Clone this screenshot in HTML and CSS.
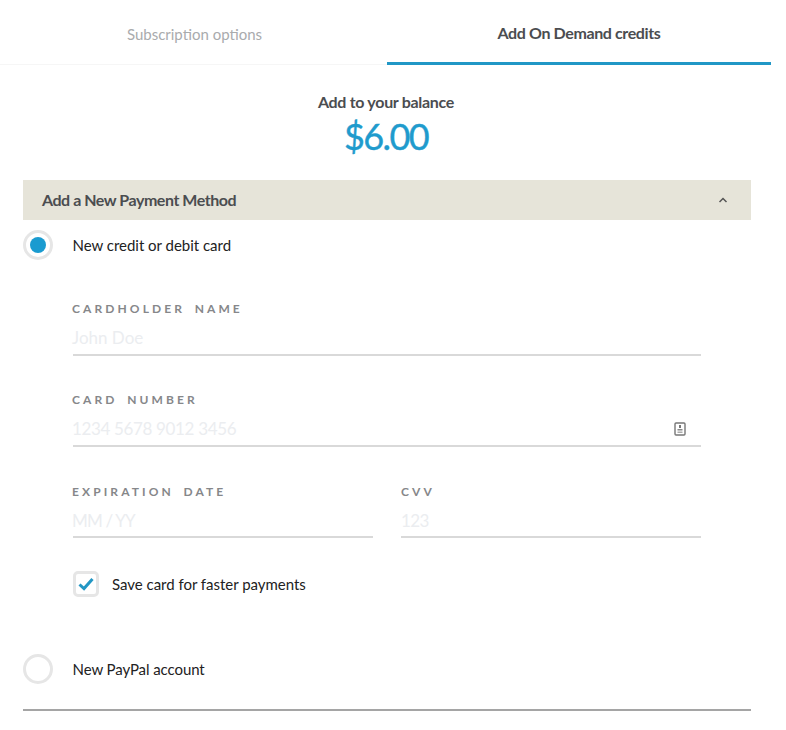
FILE: index.html
```html
<!DOCTYPE html>
<html lang="en">
<head>
<meta charset="utf-8">
<title>Add On Demand credits</title>
<link rel="stylesheet" href="styles.css">
</head>
<body>
<div class="page">
  <nav class="tabs">
    <div class="tab">Subscription options</div>
    <div class="tab tab-active">Add On Demand credits</div>
  </nav>
  <div class="balance">
    <div class="balance-label">Add to your balance</div>
    <div class="balance-amount">$6.00</div>
  </div>
  <section class="panel">
    <header class="panel-head">
      <span>Add a New Payment Method</span>
      <svg class="chevron" width="10" height="6" viewBox="0 0 10 6"><path d="M1.5 5 5 1.5 8.5 5" fill="none" stroke="#555" stroke-width="1.5"/></svg>
    </header>
    <div class="option">
      <span class="radio radio-on"></span>
      <span class="option-text">New credit or debit card</span>
    </div>
    <form class="form">
      <div class="field">
        <div class="label">Cardholder name</div>
        <div class="input input-tall"><span class="ph ph-name">John Doe</span></div>
      </div>
      <div class="field">
        <div class="label">Card number</div>
        <div class="input input-tall"><span class="ph">1234 5678 9012 3456</span>
          <svg class="card-icon" width="12" height="14" viewBox="0 0 12 14"><rect x="1" y="1" width="10" height="12" rx="1" fill="none" stroke="#777" stroke-width="1.4"/><rect x="5" y="3" width="2" height="3" fill="#777"/><rect x="3.5" y="7" width="5" height="1.5" fill="#888"/><rect x="3.5" y="9.5" width="5" height="1.5" fill="#aaa"/></svg>
        </div>
      </div>
      <div class="field-row">
        <div class="field">
          <div class="label">Expiration date</div>
          <div class="input"><span class="ph ph-date">MM / YY</span></div>
        </div>
        <div class="field field-cvv">
          <div class="label">CVV</div>
          <div class="input"><span class="ph">123</span></div>
        </div>
      </div>
      <div class="save">
        <span class="check"><svg width="18" height="16" viewBox="0 0 18 16"><path d="M2.5 8.5 7 12.6 15.5 3" fill="none" stroke="#2397c4" stroke-width="3"/></svg></span>
        <span class="option-text">Save card for faster payments</span>
      </div>
    </form>
    <div class="option option-paypal">
      <span class="radio"></span>
      <span class="option-text tight">New PayPal account</span>
    </div>
  </section>
</div>
</body>
</html>
```
FILE: styles.css
```css
* { box-sizing: border-box; }
html, body { margin: 0; padding: 0; background: #fff; }
body { font-family: Lato, "Liberation Sans", sans-serif; color: #222; }
.page { width: 771px; height: 730px; overflow: hidden; }
.tabs { display: flex; height: 65px; border-bottom: 1px solid #f6f6f6; }
.tab { width: 387px; text-align: center; font-size: 15px; line-height: 20px; padding: 24px 0 0 2px; color: #a9abad; }
.tab-active { width: 384px; color: #4b4d50; font-size: 16px; letter-spacing: -0.38px; font-weight: 700; padding: 23px 0 0; border-bottom: 3px solid #2097c6; height: 65px; }
.balance { text-align: center; padding: 27px 0 0 1px; height: 115px; }
.balance-label { font-size: 16px; letter-spacing: -0.3px; font-weight: 700; line-height: 20px; color: #4b4d50; }
.balance-amount { font-size: 36px; letter-spacing: -1.6px; line-height: 48px; color: #1f9bcd; -webkit-text-stroke: 0.4px #1f9bcd; }
.panel { margin: 0 20px 0 23px; height: 531px; border-bottom: 2px solid #a5a5a5; width: 728px; }
.panel-head { height: 40px; background: #e6e4d9; display: flex; align-items: center; justify-content: space-between; padding: 0 23px 2px 19px; font-size: 16px; letter-spacing: -0.46px; font-weight: 700; color: #4b4d50; }
.chevron { margin-top: 2px; }
.option { display: flex; align-items: center; gap: 19.5px; height: 30px; margin-top: 10px; }
.radio { width: 30px; height: 30px; border-radius: 50%; border: 3px solid #e6e6e6; background: #fff; display: flex; align-items: center; justify-content: center; flex: none; }
.radio-on::after { content: ""; width: 16px; height: 16px; border-radius: 50%; background: #1a9bd0; }
.option-text { font-size: 15px; letter-spacing: -0.02px; color: #222; }
.tight { letter-spacing: -0.08px; }
.form { padding: 0 50px; }
.form > .field:first-child { margin-top: 42px; }
.form > .field + .field { margin-top: 37px; }
.label { margin-left: -1px; font-size: 12px; line-height: 14px; font-weight: 700; letter-spacing: 3.1px; word-spacing: 3.6px; text-transform: uppercase; color: #86878a; }
.input { display: flex; align-items: center; justify-content: space-between; height: 39px; border-bottom: 2px solid #d9d9d9; font-size: 17px; letter-spacing: -0.35px; padding-top: 5px; padding-right: 15px; }
.input-tall { height: 40px; }
.ph { margin-left: -1px; color: #ebedf0; }
.ph-name { letter-spacing: 0; }
.ph-date { letter-spacing: -0.8px; }
.field-cvv .label, .field-cvv .ph { margin-left: 0; }
.field-cvv .ph { letter-spacing: -0.6px; }
.card-icon { display: block; }
.field-row { display: grid; grid-template-columns: 300px 300px; column-gap: 28px; margin-top: 38px; }
.save { display: flex; align-items: center; gap: 13px; margin-top: 33px; height: 26px; }
.check { width: 26px; height: 26px; border: 3px solid #e6e6e6; border-radius: 5px; display: flex; align-items: center; justify-content: center; flex: none; }
.option-paypal { margin-top: 57px; }
```
